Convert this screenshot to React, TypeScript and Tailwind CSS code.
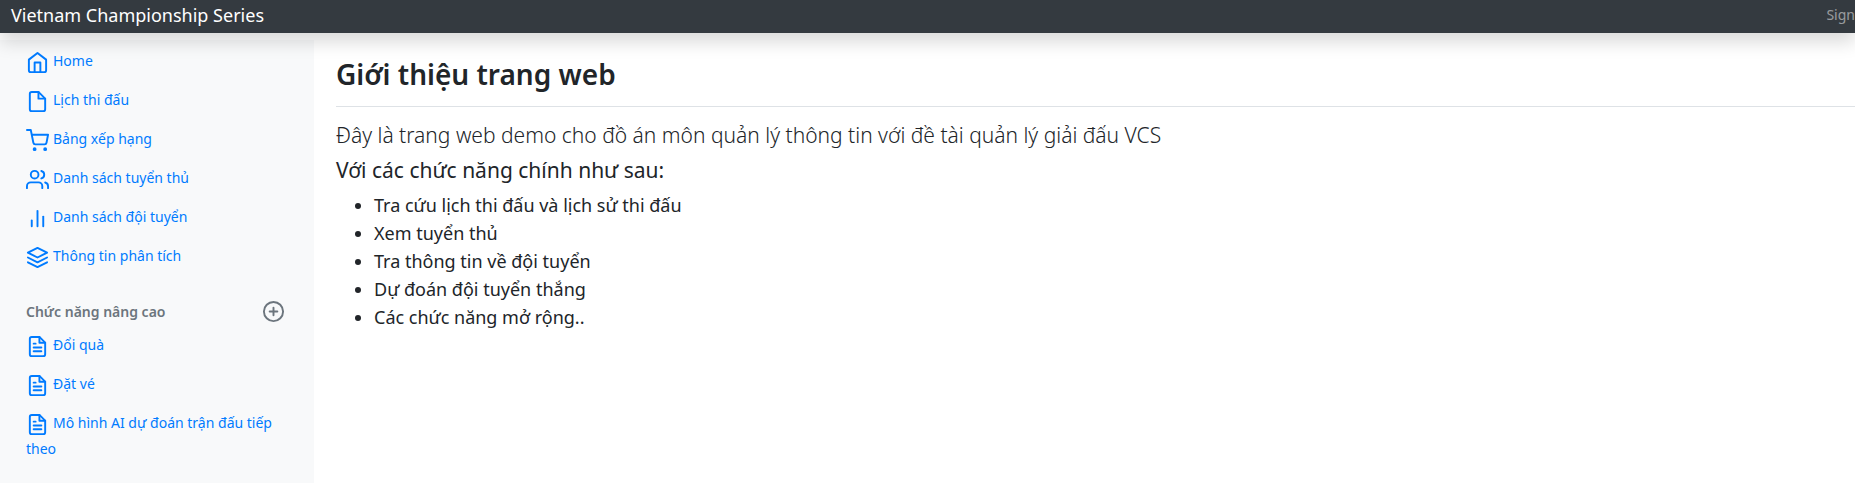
import type { ReactNode } from "react";

const stroke = {
  viewBox: "0 0 24 24",
  fill: "none",
  stroke: "currentColor",
  strokeWidth: 2,
  strokeLinecap: "round" as const,
  strokeLinejoin: "round" as const,
  "aria-hidden": true,
};

function Icon({ children }: { children: ReactNode }) {
  return (
    <svg {...stroke} className="mr-1 inline-block size-[23px] align-text-top">
      {children}
    </svg>
  );
}

const home = (
  <>
    <path d="M3 9l9-7 9 7v11a2 2 0 0 1-2 2H5a2 2 0 0 1-2-2z" />
    <polyline points="9 22 9 12 15 12 15 22" />
  </>
);
const file = (
  <>
    <path d="M13 2H6a2 2 0 0 0-2 2v16a2 2 0 0 0 2 2h12a2 2 0 0 0 2-2V9z" />
    <polyline points="13 2 13 9 20 9" />
  </>
);
const cart = (
  <>
    <circle cx="9" cy="21" r="1" />
    <circle cx="20" cy="21" r="1" />
    <path d="M1 1h4l2.68 13.39a2 2 0 0 0 2 1.61h9.72a2 2 0 0 0 2-1.61L23 6H6" />
  </>
);
const users = (
  <>
    <path d="M17 21v-2a4 4 0 0 0-4-4H5a4 4 0 0 0-4 4v2" />
    <circle cx="9" cy="7" r="4" />
    <path d="M23 21v-2a4 4 0 0 0-3-3.87" />
    <path d="M16 3.13a4 4 0 0 1 0 7.75" />
  </>
);
const bars = (
  <>
    <line x1="18" y1="20" x2="18" y2="10" />
    <line x1="12" y1="20" x2="12" y2="4" />
    <line x1="6" y1="20" x2="6" y2="14" />
  </>
);
const layers = (
  <>
    <polygon points="12 2 2 7 12 12 22 7 12 2" />
    <polyline points="2 17 12 22 22 17" />
    <polyline points="2 12 12 17 22 12" />
  </>
);
const fileText = (
  <>
    <path d="M14 2H6a2 2 0 0 0-2 2v16a2 2 0 0 0 2 2h12a2 2 0 0 0 2-2V8z" />
    <polyline points="14 2 14 8 20 8" />
    <line x1="16" y1="13" x2="8" y2="13" />
    <line x1="16" y1="17" x2="8" y2="17" />
    <polyline points="10 9 9 9 8 9" />
  </>
);

type Item = { label: string; icon: ReactNode };

const mainItems: Item[] = [
  { label: "Home", icon: home },
  { label: "Lịch thi đấu", icon: file },
  { label: "Bảng xếp hạng", icon: cart },
  { label: "Danh sách tuyển thủ", icon: users },
  { label: "Danh sách đội tuyển", icon: bars },
  { label: "Thông tin phân tích", icon: layers },
];

const advancedItems: Item[] = [
  { label: "Đổi quà", icon: fileText },
  { label: "Đặt vé", icon: fileText },
  { label: "Mô hình AI dự đoán trận đấu tiếp theo", icon: fileText },
];

const features = [
  "Tra cứu lịch thi đấu và lịch sử thi đấu",
  "Xem tuyển thủ",
  "Tra thông tin về đội tuyển",
  "Dự đoán đội tuyển thắng",
  "Các chức năng mở rộng..",
];

function NavList({ items }: { items: Item[] }) {
  return (
    <ul className="flex flex-col gap-[13px]">
      {items.map((item) => (
        <li key={item.label}>
          <a href="#" className="block text-sm leading-[25px] text-[#007bff]">
            <Icon>{item.icon}</Icon>
            {item.label}
          </a>
        </li>
      ))}
    </ul>
  );
}

export default function App() {
  return (
    <div className="flex min-h-screen flex-col overflow-x-hidden bg-white font-['Noto_Sans','Open_Sans',sans-serif] text-[#212529]">
      <header className="relative z-10 flex h-[33px] items-center justify-between bg-[#343a40] pl-[11px] pb-1 shadow-[0_9px_18px_rgba(0,0,0,0.15)]">
        <a href="#" className="text-lg leading-6 text-white">
          Vietnam Championship Series
        </a>
        <a href="#" className="text-sm leading-6 text-white/50">
          Sign
        </a>
      </header>
      <div className="flex flex-1">
        <nav className="mt-[7px] w-[314px] shrink-0 bg-[#f8f9fa] px-[26px] pt-2 pb-1">
          <NavList items={mainItems} />
          <div className="mt-[31px] mb-[9px] flex items-center justify-between pr-[3px] text-[#6c757d]">
            <h2 className="text-sm leading-[22px] font-semibold">Chức năng nâng cao</h2>
            <button type="button" aria-label="Thêm" className="block">
              <svg {...stroke} className="size-[23px]">
                <circle cx="12" cy="12" r="10" />
                <line x1="12" y1="8" x2="12" y2="16" />
                <line x1="8" y1="12" x2="16" y2="12" />
              </svg>
            </button>
          </div>
          <NavList items={advancedItems} />
        </nav>
        <main className="min-w-0 flex-1 pt-[23px] pl-[22px]">
          <h1 className="border-b border-[#dee2e6] pb-[13px] text-[28px] leading-[37px] font-semibold">
            Giới thiệu trang web
          </h1>
          <p className="mt-[15px] text-[21px] leading-[26px] font-light">
            Đây là trang web demo cho đồ án môn quản lý thông tin với đề tài quản lý giải đấu VCS
          </p>
          <h2 className="mt-[9px] text-[21px] leading-[26px]">Với các chức năng chính như sau:</h2>
          <ul className="mt-2 list-disc pl-[38px] text-lg leading-7">
            {features.map((text) => (
              <li key={text}>{text}</li>
            ))}
          </ul>
        </main>
      </div>
    </div>
  );
}
